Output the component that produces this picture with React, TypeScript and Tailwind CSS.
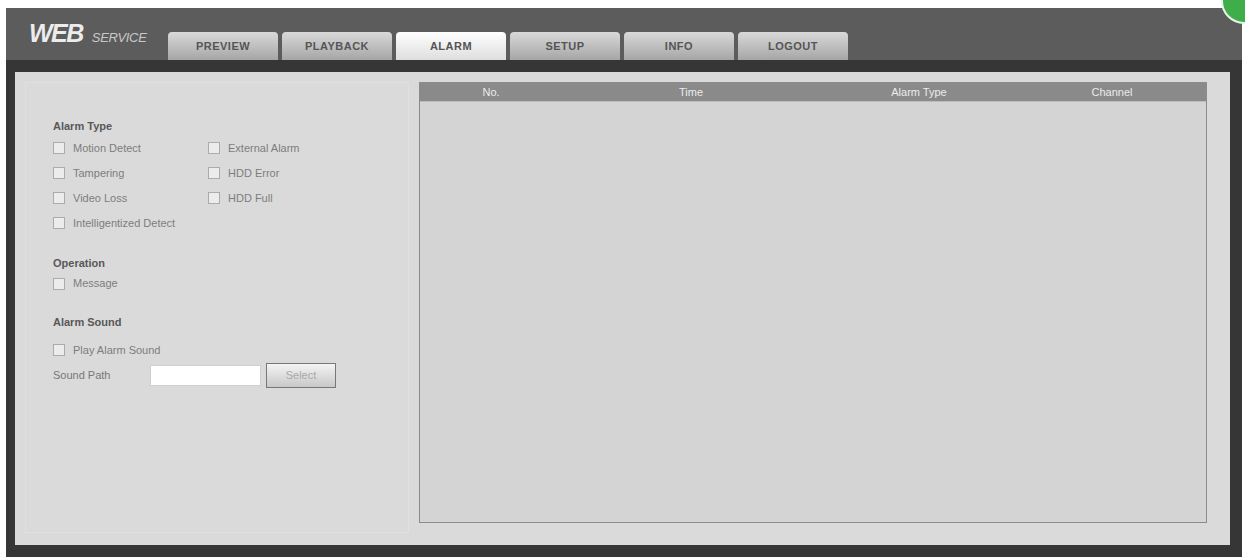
import React from 'react';

const TABS = ['PREVIEW', 'PLAYBACK', 'ALARM', 'SETUP', 'INFO', 'LOGOUT'];

const COLUMNS = [
  { label: 'No.', w: 'w-[142px]' },
  { label: 'Time', w: 'w-[258px]' },
  { label: 'Alarm Type', w: 'w-[198px]' },
  { label: 'Channel', w: 'flex-1' },
];

function Check({ label }: { label: string }) {
  return (
    <label className="flex items-center h-[25px] text-[11px] text-[#7d7d7d]">
      <span className="w-[12px] h-[12px] border border-[#ababab] bg-[#ececec] mr-[8px] shrink-0" />
      {label}
    </label>
  );
}

export default function App() {
  return (
    <div className="relative w-[1245px] h-[559px] bg-white overflow-hidden pt-[8px] pl-[6px]" style={{ fontFamily: '"Liberation Sans", Arial, sans-serif' }}>
      <div className="w-[1236px] h-[549px] bg-[#363636] flex flex-col">
        {/* Header */}
        <div className="h-[52px] bg-[#5c5c5c] flex items-end shrink-0">
          <div className="w-[162px] h-full flex items-baseline pl-[23px] pt-[13px] text-[#e6e6e6] italic">
            <span className="text-[25px] leading-[25px] font-bold tracking-[-1.5px] text-[#ececec]">WEB</span>
            <span className="text-[13px] ml-[9px] text-[#c8c8c8] tracking-[-0.3px]">SERVICE</span>
          </div>
          <div className="flex gap-[4px]">
            {TABS.map(t => (
              <div
                key={t}
                className={`w-[110px] h-[28px] rounded-t-[4px] flex items-center justify-center text-[11px] font-bold tracking-[0.5px] text-[#555] ${t === 'ALARM' ? 'bg-gradient-to-b from-[#ffffff] to-[#dedede]' : 'bg-gradient-to-b from-[#d9d9d9] to-[#a6a6a6]'}`}
              >
                {t}
              </div>
            ))}
          </div>
        </div>

        {/* Content */}
        <div className="flex-1 mt-[12px] ml-[9px] mr-[12px] mb-[12px] bg-[#dadada] flex pt-[10px] pl-[10px] pr-[23px] pb-[12px]">
          {/* Left panel */}
          <div className="w-[384px] border border-[#e0e0e0] pl-[27px] pt-[35px] mr-[10px] self-stretch">
            <div className="text-[11px] font-bold text-[#585858] mb-[1px]">Alarm Type</div>
            <div className="flex">
              <div className="w-[155px]">
                <Check label="Motion Detect" />
                <Check label="Tampering" />
                <Check label="Video Loss" />
                <Check label="Intelligentized Detect" />
              </div>
              <div>
                <Check label="External Alarm" />
                <Check label="HDD Error" />
                <Check label="HDD Full" />
              </div>
            </div>
            <div className="text-[11px] font-bold text-[#585858] mt-[19px]">Operation</div>
            <Check label="Message" />
            <div className="text-[11px] font-bold text-[#585858] mt-[18px] mb-[7px]">Alarm Sound</div>
            <Check label="Play Alarm Sound" />
            <div className="flex items-center h-[26px] text-[11px] text-[#777]">
              <span className="w-[97px]">Sound Path</span>
              <div className="w-[111px] h-[21px] bg-white border border-[#d0d0d0]" />
              <button className="ml-[5px] w-[70px] h-[25px] border border-[#777] bg-gradient-to-b from-[#f4f4f4] to-[#c8c8c8] text-[11px] text-[#aaa]">
                Select
              </button>
            </div>
          </div>

          {/* Table */}
          <div className="flex-1 h-[441px] border border-[#8c8c8c] bg-[#d4d4d4] flex flex-col">
            <div className="h-[19px] bg-[#8a8a8a] flex text-[11px] text-[#ececec] border-b border-[#bdbdbd]">
              {COLUMNS.map(c => (
                <div key={c.label} className={`${c.w} flex items-center justify-center`}>{c.label}</div>
              ))}
            </div>
          </div>
        </div>
      </div>

      {/* green corner badge */}
      <div className="absolute -top-[22px] -right-[22px] w-[46px] h-[46px] rounded-full bg-[#3fae4a] border-2 border-[#e8f5e8]" />
    </div>
  );
}
